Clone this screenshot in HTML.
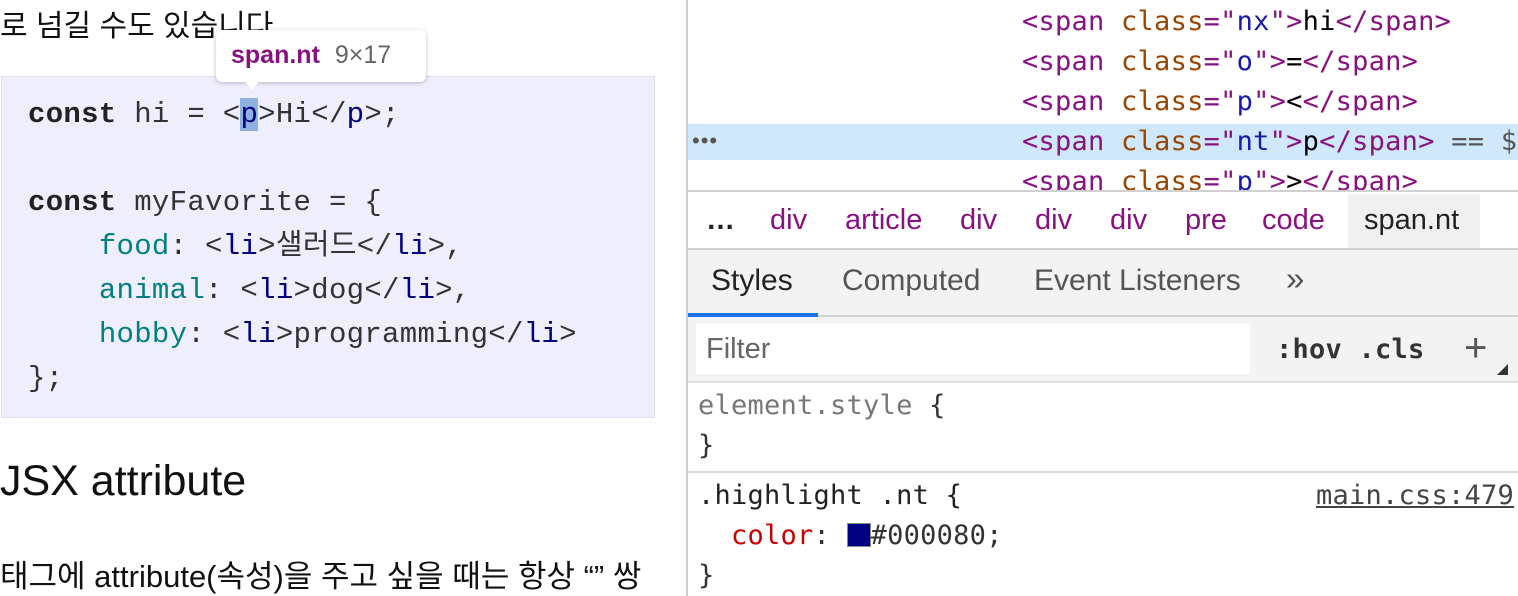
<!DOCTYPE html>
<html><head><meta charset="utf-8"><style>
body{margin:0;width:1518px;height:596px;overflow:hidden;background:#fff;position:relative;font-family:"Liberation Sans","Noto Sans CJK KR",sans-serif}
.a{position:absolute;white-space:pre}
.c{font-family:"Liberation Mono","Noto Sans CJK KR",monospace;font-size:29px;letter-spacing:0.3px;color:#333;line-height:44px}
.m{font-family:"DejaVu Sans Mono",monospace;font-size:27px;letter-spacing:0.25px;line-height:40px}
.b{font-weight:bold;color:#222}.k{color:#008080}.t{color:#000080}
.tg{color:#881280}.at{color:#994500}.av{color:#1a1aa6}
.bc{position:absolute;top:204px;font-size:29px;color:#881280}
</style></head><body>
<div class="a" style="left:0;top:1px;font-size:30px;color:#111">로 넘길 수도 있습니다</div>
<div class="a" style="left:1px;top:76px;width:654px;height:342px;background:#eeeefd;border:1px solid #e2e2ef;box-sizing:border-box"></div>
<div class="a c" style="left:28px;top:93px"><span class="b">const</span> hi = &lt;<span class="t" style="background:#8fb1e0">p</span>&gt;Hi&lt;/<span class="t">p</span>&gt;;</div>
<div class="a c" style="left:28px;top:181px"><span class="b">const</span> myFavorite = {</div>
<div class="a c" style="left:28px;top:225px">    <span class="k">food</span>: &lt;<span class="t">li</span>&gt;샐러드&lt;/<span class="t">li</span>&gt;,</div>
<div class="a c" style="left:28px;top:269px">    <span class="k">animal</span>: &lt;<span class="t">li</span>&gt;dog&lt;/<span class="t">li</span>&gt;,</div>
<div class="a c" style="left:28px;top:313px">    <span class="k">hobby</span>: &lt;<span class="t">li</span>&gt;programming&lt;/<span class="t">li</span>&gt;</div>
<div class="a c" style="left:28px;top:357px">};</div>
<div class="a" style="left:216px;top:30px;width:210px;height:52px;background:#fff;border-radius:6px;box-shadow:0 1px 4px rgba(0,0,0,.25)"></div>
<div class="a" style="left:242px;top:78px;width:0;height:0;border-left:10px solid transparent;border-right:10px solid transparent;border-top:12px solid #fff"></div>
<div class="a" style="left:231px;top:41px;font-size:25px;font-weight:bold;color:#881280">span.nt <span style="font-weight:normal;color:#666;margin-left:8px">9×17</span></div>
<div class="a" style="left:0;top:457px;font-size:43px;color:#111">JSX attribute</div>
<div class="a" style="left:0;top:551px;font-size:31px;color:#111">태그에 attribute(속성)을 주고 싶을 때는 항상 “” 쌍</div>

<div class="a" style="left:686px;top:0;width:2px;height:596px;background:#d0d0d0"></div>
<div class="a" style="left:688px;top:124px;width:830px;height:36px;background:#cfe8fc"></div>
<div class="a" style="left:692px;top:128px;font-size:22px;color:#555;letter-spacing:1px">•••</div>
<div class="a m" style="left:1022px;top:2px"><span class="tg">&lt;span</span> <span class="at">class</span><span class="tg">="</span><span class="av">nx</span><span class="tg">"&gt;</span>hi<span class="tg">&lt;/span&gt;</span></div>
<div class="a m" style="left:1022px;top:42px"><span class="tg">&lt;span</span> <span class="at">class</span><span class="tg">="</span><span class="av">o</span><span class="tg">"&gt;</span>=<span class="tg">&lt;/span&gt;</span></div>
<div class="a m" style="left:1022px;top:82px"><span class="tg">&lt;span</span> <span class="at">class</span><span class="tg">="</span><span class="av">p</span><span class="tg">"&gt;</span>&lt;<span class="tg">&lt;/span&gt;</span></div>
<div class="a m" style="left:1022px;top:122px"><span class="tg">&lt;span</span> <span class="at">class</span><span class="tg">="</span><span class="av">nt</span><span class="tg">"&gt;</span>p<span class="tg">&lt;/span&gt;</span> <span style="color:#555">== $</span></div>
<div class="a" style="left:688px;top:160px;width:830px;height:30px;overflow:hidden"><div class="a m" style="left:334px;top:2px"><span class="tg">&lt;span</span> <span class="at">class</span><span class="tg">="</span><span class="av">p</span><span class="tg">"&gt;</span>&gt;<span class="tg">&lt;/span&gt;</span></div></div>
<div class="a" style="left:688px;top:190px;width:830px;height:2px;background:#d0d0d0"></div>
<div class="a" style="left:1348px;top:194px;width:132px;height:54px;background:#f0f0f0"></div>
<div class="a" style="left:706px;top:204px;font-size:29px;color:#222;font-weight:bold">…</div>
<div class="bc" style="left:770px">div</div>
<div class="bc" style="left:845px">article</div>
<div class="bc" style="left:960px">div</div>
<div class="bc" style="left:1035px">div</div>
<div class="bc" style="left:1110px">div</div>
<div class="bc" style="left:1185px">pre</div>
<div class="bc" style="left:1262px">code</div>
<div class="bc" style="left:1364px;color:#222">span.nt</div>
<div class="a" style="left:688px;top:248px;width:830px;height:69px;background:#f3f3f3;border-top:2px solid #d0d0d0;border-bottom:2px solid #d0d0d0;box-sizing:border-box"></div>
<div class="a" style="left:688px;top:313px;width:130px;height:4px;background:#1a73e8"></div>
<div class="a" style="left:711px;top:264px;font-size:30px;color:#222">Styles</div>
<div class="a" style="left:842px;top:264px;font-size:30px;color:#555">Computed</div>
<div class="a" style="left:1034px;top:264px;font-size:30px;color:#555">Event Listeners</div>
<div class="a" style="left:1286px;top:260px;font-size:33px;color:#555">»</div>
<div class="a" style="left:688px;top:317px;width:830px;height:66px;background:#f3f3f3;border-bottom:2px solid #e0e0e0;box-sizing:border-box"></div>
<div class="a" style="left:696px;top:324px;width:554px;height:50px;background:#fff"></div>
<div class="a" style="left:706px;top:333px;font-size:29px;color:#666">Filter</div>
<div class="a m" style="left:1276px;top:330px;font-weight:bold;color:#333">:hov .cls</div>
<div class="a" style="left:1464px;top:326px;font-size:40px;color:#555">+</div>
<div class="a" style="left:1497px;top:364px;width:0;height:0;border-left:11px solid transparent;border-bottom:11px solid #333"></div>
<div class="a m" style="left:698px;top:386px;color:#777">element.style <span style="color:#333">{</span></div>
<div class="a m" style="left:698px;top:426px;color:#333">}</div>
<div class="a" style="left:688px;top:471px;width:830px;height:2px;background:#d8d8d8"></div>
<div class="a m" style="left:698px;top:476px;color:#222">.highlight .nt {</div>
<div class="a m" style="left:1316px;top:476px;color:#444;text-decoration:underline">main.css:479</div>
<div class="a m" style="left:698px;top:516px;color:#333">  <span style="color:#c80000">color</span>: <span style="display:inline-block;width:24px;height:24px;background:#000080;border:1px solid #888;vertical-align:-3px;box-sizing:border-box"></span>#000080;</div>
<div class="a m" style="left:698px;top:556px;color:#333">}</div>
</body></html>
